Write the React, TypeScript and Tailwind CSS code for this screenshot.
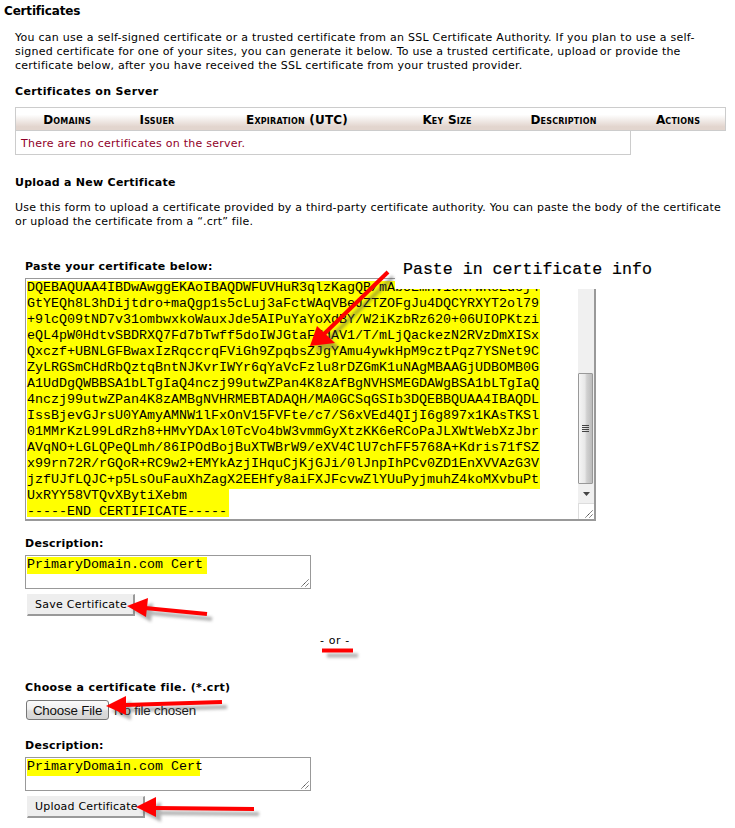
import React from "react";

const certificateLines = [
  "DQEBAQUAA4IBDwAwggEKAoIBAQDWFUVHuR3qlzKagQB/mAbUEmHv1oKfwRoEdcj4",
  "GtYEQh8L3hDijtdro+maQgp1s5cLuj3aFctWAqVBeJZTZOFgJu4DQCYRXYT2ol79",
  "+9lcQ09tND7v31ombwxkoWauxJde5AIPuYaYoXdBY/W2iKzbRz620+06UIOPKtzi",
  "eQL4pW0HdtvSBDRXQ7Fd7bTwff5doIWJGtaFUdAV1/T/mLjQackezN2RVzDmXISx",
  "Qxczf+UBNLGFBwaxIzRqccrqFViGh9ZpqbsZJgYAmu4ywkHpM9cztPqz7YSNet9C",
  "ZyLRGSmCHdRbQztqBntNJKvrIWYr6qYaVcFzlu8rDZGmK1uNAgMBAAGjUDBOMB0G",
  "A1UdDgQWBBSA1bLTgIaQ4nczj99utwZPan4K8zAfBgNVHSMEGDAWgBSA1bLTgIaQ",
  "4nczj99utwZPan4K8zAMBgNVHRMEBTADAQH/MA0GCSqGSIb3DQEBBQUAA4IBAQDL",
  "IssBjevGJrsU0YAmyAMNW1lFxOnV15FVFte/c7/S6xVEd4QIjI6g897x1KAsTKSl",
  "01MMrKzL99LdRzh8+HMvYDAxl0TcVo4bW3vmmGyXtzKK6eRCoPaJLXWtWebXzJbr",
  "AVqNO+LGLQPeQLmh/86IPOdBojBuXTWBrW9/eXV4ClU7chFF5768A+Kdris71fSZ",
  "x99rn72R/rGQoR+RC9w2+EMYkAzjIHquCjKjGJi/0lJnpIhPCv0ZD1EnXVVAzG3V",
  "jzfUJfLQJC+p5LsOuFauXhZagX2EEHfy8aiFXJFcvwZlYUuPyjmuhZ4koMXvbuPt",
];

function Grip() {
  return (
    <svg className="absolute right-0 bottom-0" width="10" height="10" viewBox="0 0 10 10">
      <path d="M1.5 8.5 8.5 1.5M5.5 8.5 8.5 5.5" stroke="#444" strokeWidth="1" strokeDasharray="1.4 .4" />
    </svg>
  );
}

function DescriptionBox({ width }: { width: string }) {
  return (
    <div className="relative h-[34px] w-[286px] border border-[#999] bg-white pl-px pt-px font-['Liberation_Mono',monospace] text-[13.333px] leading-4">
      <div className={`h-[17px] whitespace-pre bg-[#ff0] ${width}`}>PrimaryDomain.com Cert</div>
      <Grip />
    </div>
  );
}

function FormButton({ children, width }: { children: React.ReactNode; width: string }) {
  return (
    <div className={`ml-[2px] flex h-[22px] items-center whitespace-nowrap border-t border-l border-r-2 border-b-2 border-t-[#eee] border-l-[#eee] border-r-[#999] border-b-[#999] bg-[#eee] pt-px pl-[7px] ${width}`}>
      {children}
    </div>
  );
}

function Arrow({ line, head }: { line: string; head: string }) {
  return (
    <g>
      <g transform="translate(5 5)" opacity=".45" filter="url(#soft)">
        <path d={line} stroke="#555" strokeWidth="4" />
        <path d={head} fill="#555" />
      </g>
      <path d={line} stroke="#f00" strokeWidth="4" />
      <path d={head} fill="#f00" />
    </g>
  );
}

const columns = [
  ["Domains", "w-[102px]"],
  ["Issuer", "w-[78px]"],
  ["Expiration (UTC)", "w-[202px]"],
  ["Key Size", "w-[98px]"],
  ["Description", "w-[135px]"],
  ["Actions", "w-[94px]"],
];

export default function App() {
  return (
    <div className="relative h-[828px] w-[735px] overflow-hidden bg-white font-['DejaVu_Sans',Verdana,sans-serif] text-[11px] leading-[14px] text-black">
      <h1 className="pt-[3px] pl-1 text-[12px] font-bold leading-4 tracking-[-0.18px]">Certificates</h1>
      <div className="pl-[15px]">
        <p className="mt-3 whitespace-nowrap">
          <span className="block tracking-[0.265px]">You can use a self-signed certificate or a trusted certificate from an SSL Certificate Authority. If you plan to use a self-</span>
          <span className="block tracking-[0.225px]">signed certificate for one of your sites, you can generate it below. To use a trusted certificate, upload or provide the</span>
          <span className="block tracking-[0.24px]">certificate below, after you have received the SSL certificate from your trusted provider.</span>
        </p>
        <h2 className="mt-3 font-bold tracking-[0.36px]">Certificates on Server</h2>
        <div className="mt-[8px] flex h-6 w-[711px] border border-[#ccc] bg-[linear-gradient(#fff_0%,#fff_30%,#e2d5ce_85%,#e2d5ce_100%)]">
          {columns.map(([label, width]) => (
            <div key={label} className={`flex items-center justify-center whitespace-nowrap pt-[2px] text-[12px] font-bold tracking-[0.2px] [font-variant:small-caps] ${width}`}>{label}</div>
          ))}
        </div>
        <div className="h-6 w-[616px] border border-t-0 border-[#ccc] pt-[6px] pl-[5px] tracking-[0.25px] text-[#900028]">There are no certificates on the server.</div>
        <h2 className="mt-[21px] font-bold tracking-[0.26px]">Upload a New Certificate</h2>
        <p className="mt-[11px] whitespace-nowrap tracking-[0.2px]">
          <span className="block">Use this form to upload a certificate provided by a third-party certificate authority. You can paste the body of the certificate</span>
          <span className="block">or upload the certificate from a “.crt” file.</span>
        </p>
        <div className="pl-[10px]">
          <h3 className="mt-[31px] font-bold tracking-[0.31px]">Paste your certificate below:</h3>
          <div className="relative mt-[4px] h-[243px] w-[571px] border border-r-2 border-b-2 border-[#999] bg-white">
            <div className="flex h-full justify-between overflow-hidden">
              <div className="flex flex-col items-start pt-[2px] pl-px font-['Liberation_Mono',monospace] text-[13.333px] leading-[14px]">
                {certificateLines.map((line) => (
                  <div key={line} className="h-4 w-[513px] whitespace-pre bg-[#ff0]">{line}</div>
                ))}
                <div className="h-4 w-[202px] bg-[#ff0]">UxRYY58VTQvXBytiXebm</div>
                <div className="h-3 w-[202px] whitespace-nowrap bg-[#ff0]">-----END CERTIFICATE-----</div>
              </div>
              <div className="flex w-4 flex-col bg-[#f0f0f0]">
                <div className="h-[94px]" />
                <div className="flex h-[111px] w-[15px] items-center justify-center rounded-[1px] border border-[#999] bg-[linear-gradient(90deg,#f5f5f5,#e8e8e8_45%,#d0d0d0_60%,#bcbcbc)]">
                  <svg width="8" height="9" viewBox="0 0 8 9"><path d="M0 1.5h7M0 3.5h7M0 5.5h7M0 7.5h7" stroke="#444" /></svg>
                </div>
                <div className="flex h-[19px] items-center justify-center">
                  <svg width="7" height="4" viewBox="0 0 7 4"><path d="M0 0h7L3.5 4z" fill="#444" /></svg>
                </div>
                <div className="w-4 grow border-t border-l border-[#ddd] bg-white" />
              </div>
            </div>
            <div className="absolute top-[-20px] left-[369px] h-[30px] w-[275px] bg-white pt-[1px] pl-[8px] font-['Liberation_Mono',monospace] text-[16.6px] leading-5 whitespace-nowrap [-webkit-text-stroke:0.2px_#000]">Paste in certificate info</div>
            <Grip />
          </div>
          <h3 className="mt-[16px] font-bold tracking-[0.27px]">Description:</h3>
          <div className="mt-[4px]"><DescriptionBox width="w-[180px]" /></div>
          <div className="mt-[5px] tracking-[0.27px]"><FormButton width="w-[108px]">Save Certificate</FormButton></div>
          <div className="mt-[18px] pl-[295px] tracking-[0.6px]">- or -</div>
          <h3 className="mt-[33px] font-bold tracking-[0.38px]">Choose a certificate file. (*.crt)</h3>
          <div className="mt-[5px] flex h-5 items-center pl-px font-['Liberation_Sans',Arial,sans-serif] text-[13.333px] tracking-[-0.17px] text-[#111]">
            <div className="flex h-5 w-[83px] items-center justify-center rounded-[3px] border border-[#777] bg-[linear-gradient(#fafafa,#f0f0f0_45%,#ddd_55%,#d5d5d5)] pt-[2px] whitespace-nowrap">Choose File</div>
            <span className="ml-[5px] pt-[2px]">No file chosen</span>
          </div>
          <h3 className="mt-[19px] font-bold tracking-[0.27px]">Description:</h3>
          <div className="mt-[4px]"><DescriptionBox width="w-[173px]" /></div>
          <div className="mt-[5px] tracking-[0.2px]"><FormButton width="w-[118px]">Upload Certificate</FormButton></div>
        </div>
      </div>
      <svg className="pointer-events-none absolute inset-0" width="735" height="828" viewBox="0 0 735 828">
        <defs><filter id="soft" filterUnits="userSpaceOnUse" x="0" y="0" width="735" height="828"><feGaussianBlur stdDeviation="1.5" /></filter></defs>
        <Arrow line="M388 272 323 335" head="M310 346 317 326 335 343Z" />
        <Arrow line="M207 614 145 608" head="M127 606 148 598 146 617Z" />
        <Arrow line="M222 702 125 705" head="M106 706 126 696 126 715Z" />
        <Arrow line="M254 809 155 808" head="M136 807 156 797 156 817Z" />
        <Arrow line="M322 650.5H353" head="" />
      </svg>
    </div>
  );
}
